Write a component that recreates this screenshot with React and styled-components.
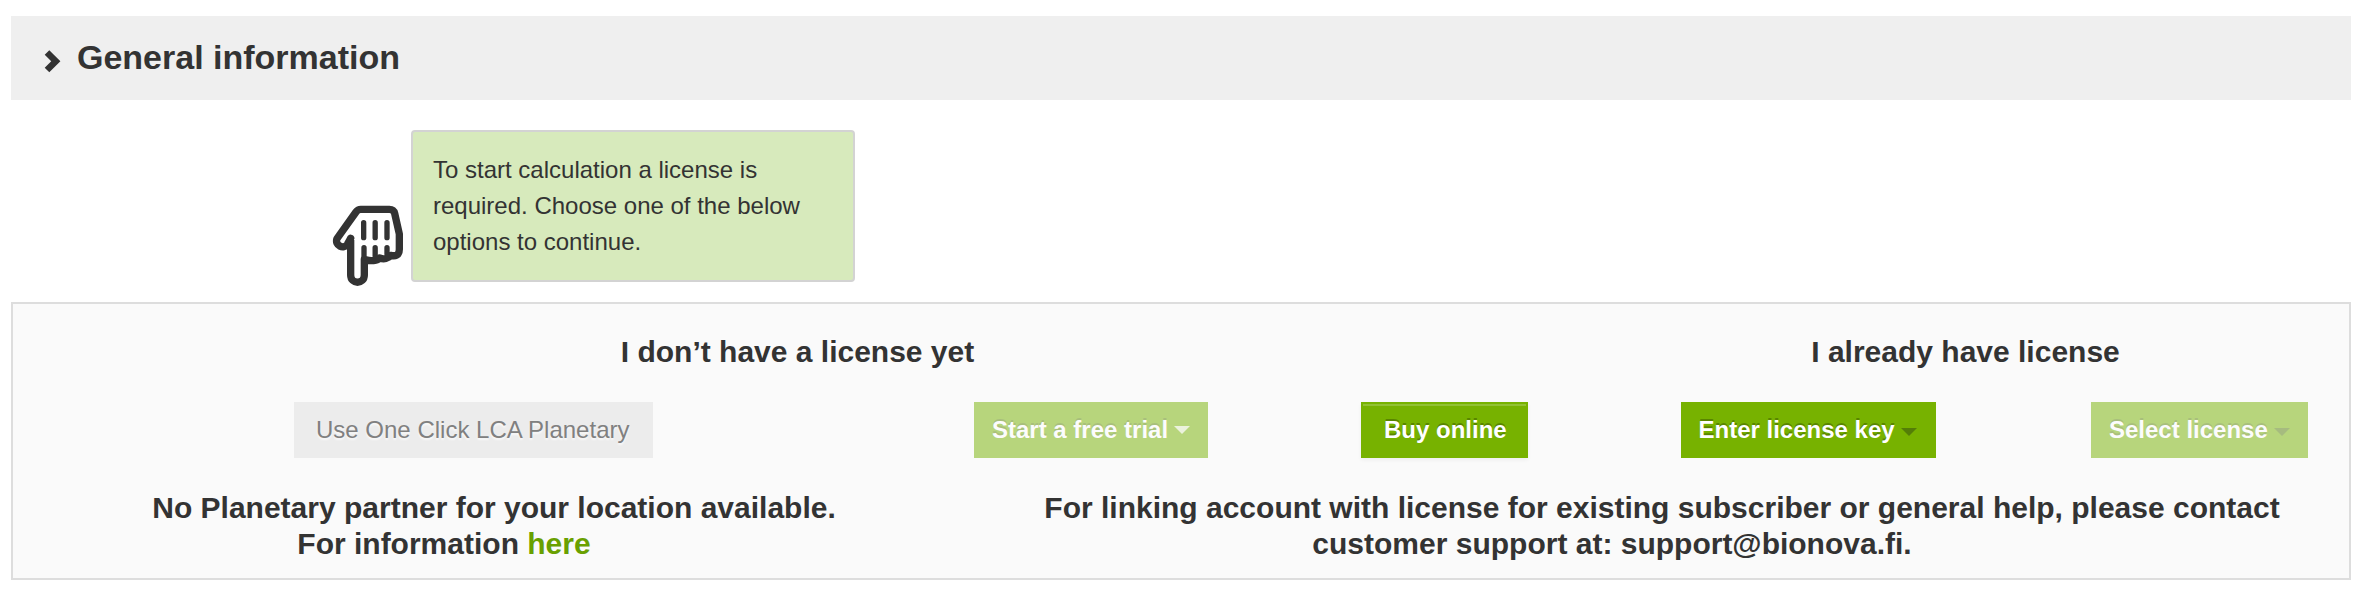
import React from "react";
import styled, { createGlobalStyle } from "styled-components";

const GlobalStyle = createGlobalStyle`
  body {
    margin: 0;
    background: #fff;
    color: #333;
    font-family: "Liberation Sans", Arial, Helvetica, sans-serif;
    font-size: 24px;
  }
  * { box-sizing: border-box; }
`;

const Page = styled.main`
  height: 590px;
  padding: 16px 11px 0;
`;

const SectionHeader = styled.header`
  display: flex;
  align-items: center;
  height: 84px;
  padding-left: 33px;
  background: #efefef;
`;

const SectionTitle = styled.h2`
  margin: 0 0 2px 15px;
  font-size: 34px;
  line-height: 40px;
`;

const Chevron = styled.svg`
  display: block;
  margin-top: 6px;
`;

const Hint = styled.div`
  display: flex;
  align-items: flex-end;
  margin: 30px 0 20px 320px;
  height: 152px;
`;

const Hand = styled.svg`
  flex: none;
  margin: 0 5px -6px 0;
`;

const HintBox = styled.p`
  width: 444px;
  height: 152px;
  margin: 0;
  padding: 20px 20px;
  border: 2px solid #d3d3d3;
  border-radius: 4px;
  background: #d7eabc;
  line-height: 36px;
`;

const Panel = styled.section`
  height: 278px;
  border: 2px solid #ddd;
  background: #fafafa;
`;

const Row = styled.div`
  display: flex;
  height: ${(p) => p.$height}px;
`;

const Cell = styled.div`
  flex: ${(p) => (p.$width ? `0 0 ${p.$width}px` : "1")};
  display: flex;
  justify-content: ${(p) => (p.$end ? "flex-end" : "center")};
  padding-right: ${(p) => (p.$end ? "41px" : "0")};
`;

const Heading = styled.h3`
  margin: 0;
  padding: 30px 1px 0 0;
  font-size: 30px;
  line-height: 36px;
`;

const Note = styled.p`
  margin: 0;
  padding: 32px 0 0;
  font-size: 30px;
  font-weight: bold;
  line-height: 36px;
  text-align: center;
`;

const LastLine = styled.span`
  display: block;
  padding-right: 100px;
`;

const Link = styled.a`
  color: #69a000;
  text-decoration: none;
`;

const Button = styled.button`
  display: flex;
  align-items: center;
  width: ${(p) => p.$width}px;
  height: 56px;
  margin: 0;
  padding: 0 0 0 18px;
  border: 0;
  background: #77b200;
  color: #fff;
  font: bold 24px/28px "Liberation Sans", Arial, sans-serif;
  text-shadow: 0 -2px 0 rgba(0, 0, 0, 0.25);
  white-space: nowrap;
  opacity: ${(p) => (p.$faded ? 0.5 : 1)};
`;

const BuyButton = styled(Button)`
  padding-left: 21px;
  border: 2px solid #77b200;
  box-shadow: inset 0 2px 0 rgba(255, 255, 255, 0.2), 0 2px 4px rgba(0, 0, 0, 0.05);
`;

const PlainButton = styled(Button)`
  padding-left: 22px;
  background: #ececec;
  color: #808080;
  font-weight: normal;
  text-shadow: 0 2px 2px rgba(255, 255, 255, 0.75);
`;

const Caret = styled.span`
  margin: ${(p) => p.$drop}px 0 0 6px;
  border: 8px solid transparent;
  border-top-color: ${(p) => p.$color};
  border-bottom: 0;
`;

export default function App() {
  return (
    <>
      <GlobalStyle />
      <Page>
        <SectionHeader>
          <Chevron width="18" height="24" viewBox="0 0 18 24" fill="none" stroke="#333" strokeWidth="6.500">
            <path d="M3 3.500 11.800 12.200 3 21" strokeLinejoin="miter" />
          </Chevron>
          <SectionTitle>General information</SectionTitle>
        </SectionHeader>

        <Hint>
          <Hand width="75" height="84" viewBox="33 42 225 252" fill="none" stroke="#333" strokeLinecap="round" strokeLinejoin="round">
            <path
              strokeWidth="22"
              d="M92 145V255C92 284 133 284 133 255V208M92 145L82 163C72 179 43 167 51 146L108 66Q114 58 122 58H208Q221 58 224 70L238 132V178C238 198 224 199 212 196C205 206 192 209 179 204C172 213 151 214 137 209"
            />
            <path strokeWidth="16" d="M131 98V143M165.500 98V143M201 98V143M132 173V205M165.500 173V198M201 173V192" />
          </Hand>
          <HintBox>
            To start calculation a license is
            <br />
            required. Choose one of the below
            <br />
            options to continue.
          </HintBox>
        </Hint>

        <Panel>
          <Row $height={98}>
            <Cell $width={1570}>
              <Heading>I don’t have a license yet</Heading>
            </Cell>
            <Cell>
              <Heading>I already have license</Heading>
            </Cell>
          </Row>
          <Row $height={56}>
            <Cell $width={921}>
              <PlainButton $width={359}>Use One Click LCA Planetary</PlainButton>
            </Cell>
            <Cell $width={314}>
              <Button $width={234} $faded>
                Start a free trial
                <Caret $color="rgba(255,255,255,0.75)" $drop={0} />
              </Button>
            </Cell>
            <Cell $width={393}>
              <BuyButton $width={167}>Buy online</BuyButton>
            </Cell>
            <Cell $width={334}>
              <Button $width={255}>
                Enter license key
                <Caret $color="#547e07" $drop={4} />
              </Button>
            </Cell>
            <Cell $end>
              <Button $width={217} $faded>
                Select license
                <Caret $color="#547e07" $drop={4} />
              </Button>
            </Cell>
          </Row>
          <Row $height={120}>
            <Cell $width={962}>
              <Note>
                No Planetary partner for your location available.
                <LastLine>
                  For information <Link>here</Link>
                </LastLine>
              </Note>
            </Cell>
            <Cell>
              <Note>
                For linking account with license for existing subscriber or general help, please contact
                <LastLine>customer support at: support@bionova.fi.</LastLine>
              </Note>
            </Cell>
          </Row>
        </Panel>
      </Page>
    </>
  );
}
